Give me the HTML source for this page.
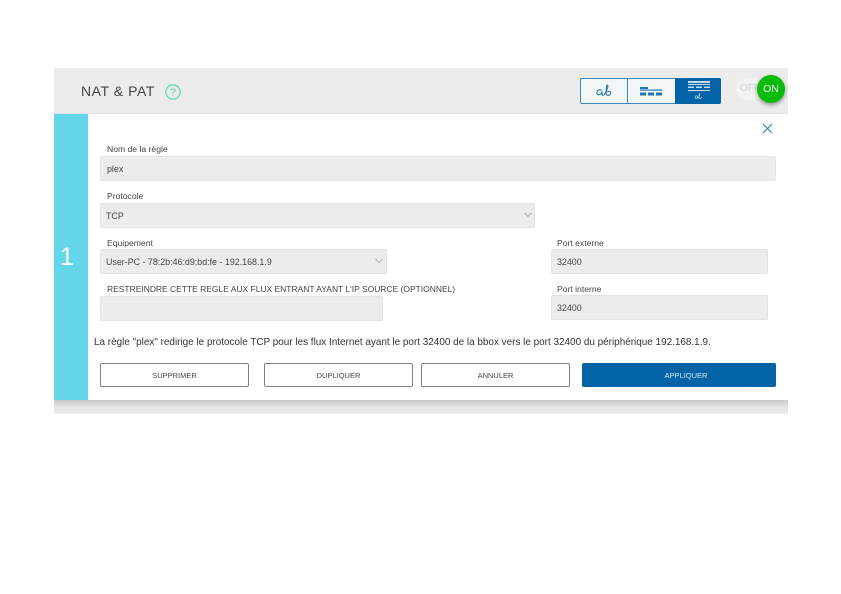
<!DOCTYPE html>
<html lang="fr"><head><meta charset="utf-8"><title>NAT &amp; PAT</title>
<style>
html,body{margin:0;padding:0;background:#fff}
body{width:841px;height:594px;position:relative;overflow:hidden;font-family:"Liberation Sans",sans-serif;color:#555}
#w{left:0;top:0;width:841px;height:594px;filter:blur(.35px)}
div,span{position:absolute;box-sizing:border-box}
.t{white-space:nowrap;font-size:8.6px;line-height:12px;color:#444}
.f{background:#ececec;border:1px solid #e4e4e4;border-radius:2px;font-size:8.9px;line-height:22px;padding-left:5px;color:#444;white-space:nowrap}
.b{top:363px;height:24px;width:149px;border:1px solid #808080;border-radius:2px;background:#fff;font-size:7.5px;line-height:23px;text-align:center;color:#444}
</style></head><body><div id="w">
<div style="left:54px;top:68px;width:734px;height:46px;background:#ececec;border-bottom:1px solid #e2e2e2"></div>
<div class="t" style="left:81px;top:83px;font-size:14px;line-height:17px;letter-spacing:.55px;color:#444">NAT &amp; PAT</div>
<svg style="position:absolute;left:164px;top:83px" width="18" height="18" viewBox="0 0 18 18"><circle cx="9" cy="9" r="7.2" fill="none" stroke="#5ed8bc" stroke-width="1.3"/><text x="9" y="12.700" font-size="10.500" text-anchor="middle" fill="#48c9ab" font-family="Liberation Sans">?</text></svg>

<div style="left:580px;top:78px;width:141px;height:26px;border:1px solid #3f88bb;border-radius:2px;background:#f4f7f9"></div>
<div style="left:627px;top:78px;width:1px;height:26px;background:#3f88bb"></div>
<div style="left:675px;top:78px;width:46px;height:26px;background:#0263a6;border-radius:0 2px 2px 0"></div>
<svg style="position:absolute;left:594px;top:83px" width="20" height="16" viewBox="0 0 20 16"><path d="M8 7.500C5 5.500 2.500 8 3 10.500C3.500 13 7 12 8 8.500L8 11C8.500 13 10 12.500 11 10.500C13 7 14.500 3 13.500 2C12.500 1.500 12 7 12 10.500C12.500 13 15.500 13 16.500 10.500C17 8.500 15 7.500 13 9" fill="none" stroke="#2f7fb5" stroke-width="1.100"/></svg>
<svg style="position:absolute;left:640px;top:85px" width="23" height="13" viewBox="0 0 23 13"><g fill="#1f74ae"><rect x="0" y="2" width="8" height="2"/><rect x="0" y="4.500" width="22" height="1.200"/><rect x="0" y="7.500" width="6" height="3"/><rect x="8" y="7.500" width="6" height="3"/><rect x="16" y="7.500" width="6" height="3"/></g></svg>
<svg style="position:absolute;left:687px;top:79px" width="23" height="24" viewBox="0 0 23 24"><g fill="#c4d9e9"><rect x="1" y="2" width="22" height="2"/><rect x="1" y="5" width="22" height="1"/><rect x="1" y="7.500" width="6" height="1.500"/><rect x="9" y="7.500" width="6" height="1.500"/><rect x="17" y="7.500" width="6" height="1.500"/><rect x="1" y="11" width="22" height="1"/></g><path d="M10 17C8 16 7.500 19 9 19.500C10 19.500 10.500 18 10.500 17L11 19.500C12 18.500 13 16 12.500 14.500C12 15 12 18 12 19C13 20 14.500 19 14.500 18" fill="none" stroke="#c4d9e9" stroke-width=".7"/></svg>

<div style="left:736px;top:78px;width:40px;height:22px;border-radius:11px;background:#f2f2f2"></div>
<div class="t" style="left:740px;top:83px;font-size:10px;font-weight:bold;color:#dcdcdc">OFF</div>
<div style="left:757px;top:75px;width:28px;height:28px;border-radius:50%;background:#07bb07;box-shadow:0 2px 4px rgba(0,0,0,.4);color:#fff;font-size:10.500px;line-height:28px;text-align:center">ON</div>

<div style="left:54px;top:400px;width:734px;height:14px;background:linear-gradient(#c9c9c9,#e6e6e6 55%,#ececec)"></div>
<div style="left:54px;top:114px;width:734px;height:286px;background:#fff"></div>
<div style="left:54px;top:114px;width:34px;height:286px;background:#65d5ea"></div>
<div style="left:55px;top:243px;width:24px;text-align:center;color:#fff;font-size:25px;line-height:28px">1</div>
<svg style="position:absolute;left:761px;top:122px" width="13" height="13" viewBox="0 0 13 13"><path d="M2 2L11 11M11 2L2 11" stroke="#2b7fb8" stroke-width="1.100" fill="none"/></svg>

<div class="t" style="left:107px;top:143px">Nom de la règle</div>
<div class="f" style="left:100px;top:156px;width:676px;height:25px;line-height:24px;padding-left:6px">plex</div>
<div class="t" style="left:107px;top:190px">Protocole</div>
<div class="f" style="left:100px;top:203px;width:435px;height:25px;line-height:24px">TCP</div>
<svg style="position:absolute;left:523px;top:211px" width="10" height="8" viewBox="0 0 10 8"><path d="M1.500 2L5 5.500L8.500 2" stroke="#aaa" fill="none" stroke-width=".9"/></svg>
<div class="t" style="left:107px;top:237px">Equipement</div>
<div class="f" style="left:100px;top:249px;width:287px;height:25px;line-height:24px;font-size:8.900px">User-PC - 78:2b:46:d9:bd:fe - 192.168.1.9</div>
<svg style="position:absolute;left:374px;top:257px" width="10" height="8" viewBox="0 0 10 8"><path d="M1.500 2L5 5.500L8.500 2" stroke="#aaa" fill="none" stroke-width=".9"/></svg>
<div class="t" style="left:107px;top:283px;font-size:8.470px">RESTREINDRE CETTE REGLE AUX FLUX ENTRANT AYANT L'IP SOURCE (OPTIONNEL)</div>
<div class="f" style="left:100px;top:296px;width:283px;height:25px"></div>
<div class="t" style="left:557px;top:237px">Port externe</div>
<div class="f" style="left:551px;top:249px;width:217px;height:25px;line-height:24px">32400</div>
<div class="t" style="left:557px;top:283px">Port interne</div>
<div class="f" style="left:551px;top:295px;width:217px;height:25px;line-height:25px">32400</div>
<div class="t" style="left:94px;top:336px;font-size:9.940px;line-height:13px;color:#333">La règle "plex" redirige le protocole TCP pour les flux Internet ayant le port 32400 de la bbox vers le port 32400 du périphérique 192.168.1.9.</div>

<div class="b" style="left:100px">SUPPRIMER</div>
<div class="b" style="left:264px">DUPLIQUER</div>
<div class="b" style="left:421px">ANNULER</div>
<div class="b" style="left:582px;width:194px;background:#0263a6;border-color:#0263a6;color:#d9e8f3;padding-left:14px">APPLIQUER</div>
</div></body></html>
